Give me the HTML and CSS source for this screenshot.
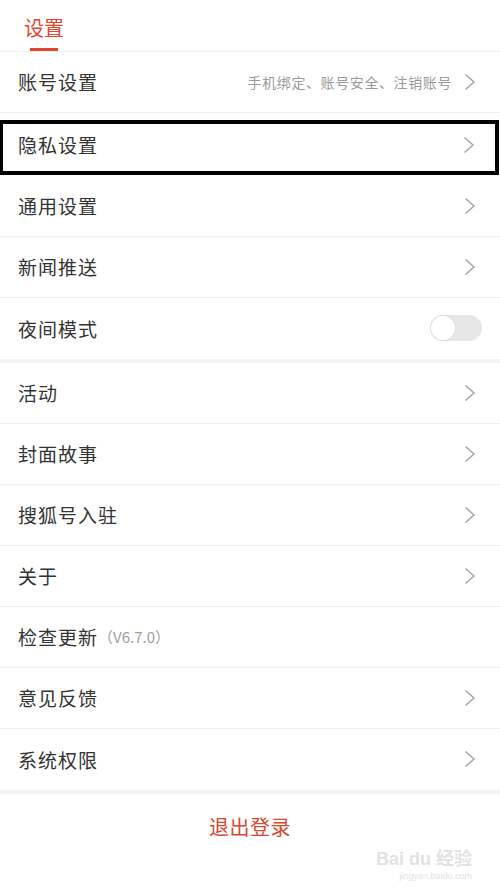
FILE: index.html
```html
<!DOCTYPE html>
<html lang="zh">

<head>
    <meta charset="UTF-8" />
    <meta name="viewport" content="width=device-width, initial-scale=1" />
    <title>设置</title>
    <link rel="stylesheet" href="styles.css">
</head>

<body>
    <div class="page">
        <div class="tab-bar">
            <span class="tab-title">设置</span>
        </div>

        <div class="group">
            <div class="row">
                <span class="label">账号设置</span>
                <span class="sub">手机绑定、账号安全、注销账号</span>
                <svg class="arrow" viewBox="0 0 12 18"><path d="M1.5 1.5 L10 9 L1.5 16.5" /></svg>
            </div>
            <div class="row row-marked">
                <span class="label">隐私设置</span>
                <svg class="arrow" viewBox="0 0 12 18"><path d="M1.5 1.5 L10 9 L1.5 16.5" /></svg>
            </div>
            <div class="row">
                <span class="label">通用设置</span>
                <svg class="arrow" viewBox="0 0 12 18"><path d="M1.5 1.5 L10 9 L1.5 16.5" /></svg>
            </div>
            <div class="row">
                <span class="label">新闻推送</span>
                <svg class="arrow" viewBox="0 0 12 18"><path d="M1.5 1.5 L10 9 L1.5 16.5" /></svg>
            </div>
            <div class="row row-last">
                <span class="label">夜间模式</span>
                <span class="switch"><span class="knob"></span></span>
            </div>
        </div>

        <div class="group">
            <div class="row">
                <span class="label">活动</span>
                <svg class="arrow" viewBox="0 0 12 18"><path d="M1.5 1.5 L10 9 L1.5 16.5" /></svg>
            </div>
            <div class="row">
                <span class="label">封面故事</span>
                <svg class="arrow" viewBox="0 0 12 18"><path d="M1.5 1.5 L10 9 L1.5 16.5" /></svg>
            </div>
            <div class="row">
                <span class="label">搜狐号入驻</span>
                <svg class="arrow" viewBox="0 0 12 18"><path d="M1.5 1.5 L10 9 L1.5 16.5" /></svg>
            </div>
            <div class="row">
                <span class="label">关于</span>
                <svg class="arrow" viewBox="0 0 12 18"><path d="M1.5 1.5 L10 9 L1.5 16.5" /></svg>
            </div>
            <div class="row">
                <span class="label">检查更新</span>
                <span class="version">（V6.7.0）</span>
            </div>
            <div class="row">
                <span class="label">意见反馈</span>
                <svg class="arrow" viewBox="0 0 12 18"><path d="M1.5 1.5 L10 9 L1.5 16.5" /></svg>
            </div>
            <div class="row row-last">
                <span class="label">系统权限</span>
                <svg class="arrow" viewBox="0 0 12 18"><path d="M1.5 1.5 L10 9 L1.5 16.5" /></svg>
            </div>
        </div>

        <div class="logout">退出登录</div>

        <!-- 水印 -->
        <div class="watermark">
            <span class="wm-logo">Bai du 经验</span>
            <span class="wm-url">jingyan.baidu.com</span>
        </div>
    </div>
</body>

</html>
```

FILE: styles.css
```css
body {
    margin: 0;
    background: #f4f4f4;
    font-family: "Noto Sans CJK SC", "Noto Sans", sans-serif;
}

.page {
    position: relative;
    width: 500px;
    height: 894px;
    background: #ffffff;
}

.tab-bar {
    height: 51px;
    border-bottom: 1px solid #f0f0f0;
    display: flex;
    align-items: flex-start;
    padding-left: 24px;
}

.tab-title {
    position: relative;
    margin-top: 14px;
    font-size: 20px;
    line-height: 28px;
    color: #e2452f;
}

.tab-title::after {
    content: "";
    position: absolute;
    left: 6px;
    top: 34px;
    width: 28px;
    height: 3px;
    background: #e2452f;
}

.group {
    border-bottom: 4px solid #f4f4f4;
}

.row {
    height: 59px;
    padding: 0 24px 1px 18px;
    border-bottom: 1px solid #efefef;
    display: flex;
    align-items: center;
    box-sizing: content-box;
}

.row-last {
    border-bottom: none;
    height: 60px;
}

/* 标注框 */
.row-marked {
    margin-top: 7px;
    margin-right: 1px;
    margin-bottom: 1px;
    border: 4px solid #000;
    border-left-width: 3px;
    padding: 0 20px 6px 15px;
    height: 41px;
}

.label {
    font-size: 19px;
    color: #333333;
    letter-spacing: 1px;
}

.sub {
    margin-left: auto;
    margin-right: 12px;
    font-size: 14px;
    color: #9a9a9a;
    letter-spacing: 0.6px;
}

.arrow {
    margin-left: auto;
    width: 12px;
    height: 18px;
    fill: none;
    stroke: #a6a6a6;
    stroke-width: 1.5;
}

.sub + .arrow {
    margin-left: 0;
}

.version {
    font-size: 15px;
    color: #a0a0a0;
    margin-left: 0;
}

.switch {
    margin-left: auto;
    margin-right: -6px;
    width: 52px;
    height: 26px;
    border-radius: 13px;
    background: #e6e6e6;
    display: flex;
    align-items: center;
    padding: 0 1px;
    box-sizing: border-box;
}

.knob {
    width: 24px;
    height: 24px;
    border-radius: 50%;
    background: #fff;
    box-shadow: 0 0 0 1px #e0e0e0;
}

.logout {
    height: 64px;
    display: flex;
    align-items: center;
    justify-content: center;
    font-size: 20px;
    color: #d9472f;
    letter-spacing: 0.5px;
}

.watermark {
    position: absolute;
    right: 28px;
    bottom: 12px;
    display: flex;
    flex-direction: column;
    align-items: flex-end;
    color: #e2e2e2;
    font-family: "Liberation Sans", "Noto Sans CJK SC", sans-serif;
}

.wm-logo {
    font-size: 18px;
    font-weight: 700;
    line-height: 22px;
}

.wm-url {
    font-size: 9px;
    line-height: 12px;
}
```
